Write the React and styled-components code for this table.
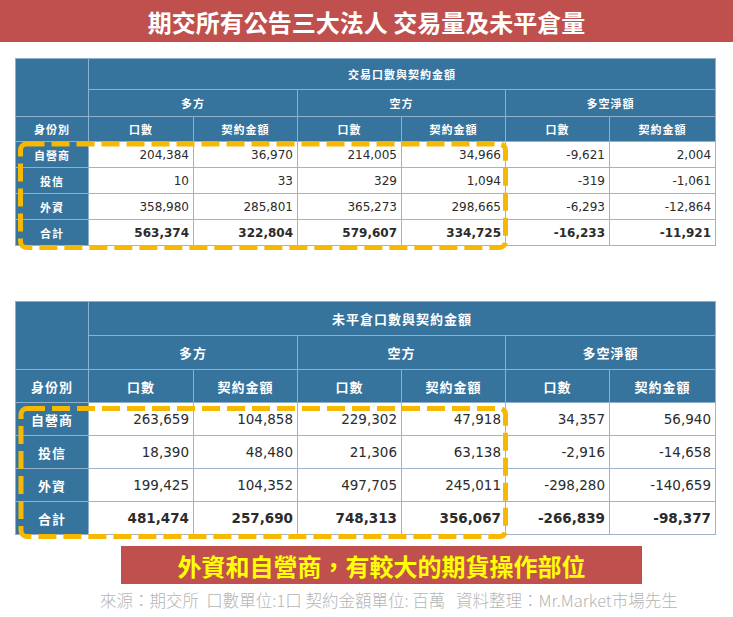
import React from "react";
import styled, { createGlobalStyle } from "styled-components";

const GlobalStyle = createGlobalStyle`
  html, body {
    margin: 0;
    padding: 0;
    background: #ffffff;
  }
  body {
    font-family: "DejaVu Sans", "Noto Sans CJK TC", sans-serif;
  }
`;

// 전체 페이지
const Page = styled.div`
  width: 733px;
  height: 617px;
  display: flex;
  flex-direction: column;
  overflow: hidden;
`;

const TitleBar = styled.h1`
  margin: 0;
  height: 42px;
  background: #c0504d;
  color: #ffffff;
  font-family: "Noto Sans CJK TC", sans-serif;
  font-size: 24px;
  font-weight: 700;
  display: flex;
  align-items: center;
  justify-content: center;
`;

const TableWrap = styled.div`
  position: relative;
  width: 700px;
  margin: ${(p) => p.$top}px 0 0 15px;
`;

const Highlight = styled.svg`
  position: absolute;
  left: 0;
  top: 0;
  width: 100%;
  height: calc(100% + 10px);
  overflow: visible;
  pointer-events: none;
`;

const Table = styled.table`
  width: 700px;
  border-collapse: collapse;
  table-layout: fixed;
  font-size: ${(p) => (p.$large ? "13.5px" : "12px")};
  color: #2b2b2b;

  th {
    background: #36739d;
    color: #ffffff;
    font-family: "Noto Sans CJK TC", sans-serif;
    font-size: ${(p) => (p.$large ? "13px" : "11px")};
    font-weight: 700;
    border: 1px solid #8db0cc;
    text-align: center;
    padding: 0;
    letter-spacing: 1px;
  }

  td {
    border: 1px solid #9fb2ca;
    text-align: right;
    padding: 0 4px 0 0;
    background: #ffffff;
  }
`;

const HeadRow = styled.tr`
  height: ${(p) => p.$h}px;
`;

const DataRow = styled.tr`
  height: ${(p) => p.$h}px;

  td {
    font-weight: ${(p) => (p.$total ? 700 : 400)};
  }
`;

const Banner = styled.div`
  margin: 11px 0 0 121px;
  width: 521px;
  height: 38px;
  background: #c0504d;
  color: #ffff00;
  font-family: "Noto Sans CJK TC", sans-serif;
  font-size: 24px;
  font-weight: 700;
  display: flex;
  align-items: center;
  justify-content: center;
`;

const Footer = styled.p`
  margin: 6px 0 0 100px;
  line-height: 20px;
  font-family: "Noto Sans CJK TC", sans-serif;
  font-size: 16.5px;
  font-weight: 300;
  color: #b5b5b5;
  white-space: pre;
`;

const cols = [73, 105, 104, 104, 104, 104, 106];

const tradeRows = [
  ["自營商", "204,384", "36,970", "214,005", "34,966", "-9,621", "2,004"],
  ["投信", "10", "33", "329", "1,094", "-319", "-1,061"],
  ["外資", "358,980", "285,801", "365,273", "298,665", "-6,293", "-12,864"],
  ["合計", "563,374", "322,804", "579,607", "334,725", "-16,233", "-11,921"],
];

const openRows = [
  ["自營商", "263,659", "104,858", "229,302", "47,918", "34,357", "56,940"],
  ["投信", "18,390", "48,480", "21,306", "63,138", "-2,916", "-14,658"],
  ["外資", "199,425", "104,352", "497,705", "245,011", "-298,280", "-140,659"],
  ["合計", "481,474", "257,690", "748,313", "356,067", "-266,839", "-98,377"],
];

const InstitutionTable = ({ caption, rows, large, heads, rowH, box }) => (
  <>
    <Table $large={large}>
      <colgroup>
        {cols.map((w, i) => (
          <col key={i} style={{ width: w }} />
        ))}
      </colgroup>
      <thead>
        <HeadRow $h={heads[0]}>
          <th rowSpan={2} />
          <th colSpan={6}>{caption}</th>
        </HeadRow>
        <HeadRow $h={heads[1]}>
          <th colSpan={2}>多方</th>
          <th colSpan={2}>空方</th>
          <th colSpan={2}>多空淨額</th>
        </HeadRow>
        <HeadRow $h={heads[2]}>
          <th>身份別</th>
          <th>口數</th>
          <th>契約金額</th>
          <th>口數</th>
          <th>契約金額</th>
          <th>口數</th>
          <th>契約金額</th>
        </HeadRow>
      </thead>
      <tbody>
        {rows.map(([label, ...vals], i) => (
          <DataRow key={label} $h={rowH} $total={i === rows.length - 1}>
            <th>{label}</th>
            {vals.map((v, j) => (
              <td key={j}>{v}</td>
            ))}
          </DataRow>
        ))}
      </tbody>
    </Table>
    <Highlight>
      <rect
        x={box.x}
        y={box.y}
        width={box.w}
        height={box.h}
        rx="6"
        fill="none"
        stroke="#f6b800"
        strokeWidth="5"
        strokeDasharray="18 7"
      />
    </Highlight>
  </>
);

export default function App() {
  return (
    <Page>
      <GlobalStyle />
      <TitleBar>期交所有公告三大法人 交易量及未平倉量</TitleBar>

      <TableWrap $top={16}>
        <InstitutionTable
          caption="交易口數與契約金額"
          rows={tradeRows}
          heads={[31, 27, 25]}
          rowH={26}
          box={{ x: 5.5, y: 86, w: 485, h: 103.5 }}
        />
      </TableWrap>

      <TableWrap $top={55}>
        <InstitutionTable
          caption="未平倉口數與契約金額"
          rows={openRows}
          large
          heads={[34, 34, 33]}
          rowH={33}
          box={{ x: 6, y: 107.5, w: 484.5, h: 128 }}
        />
      </TableWrap>

      <Banner>外資和自營商，有較大的期貨操作部位</Banner>
      <Footer>{"來源：期交所  口數單位:1口 契約金額單位: 百萬   資料整理：Mr.Market市場先生"}</Footer>
    </Page>
  );
}
